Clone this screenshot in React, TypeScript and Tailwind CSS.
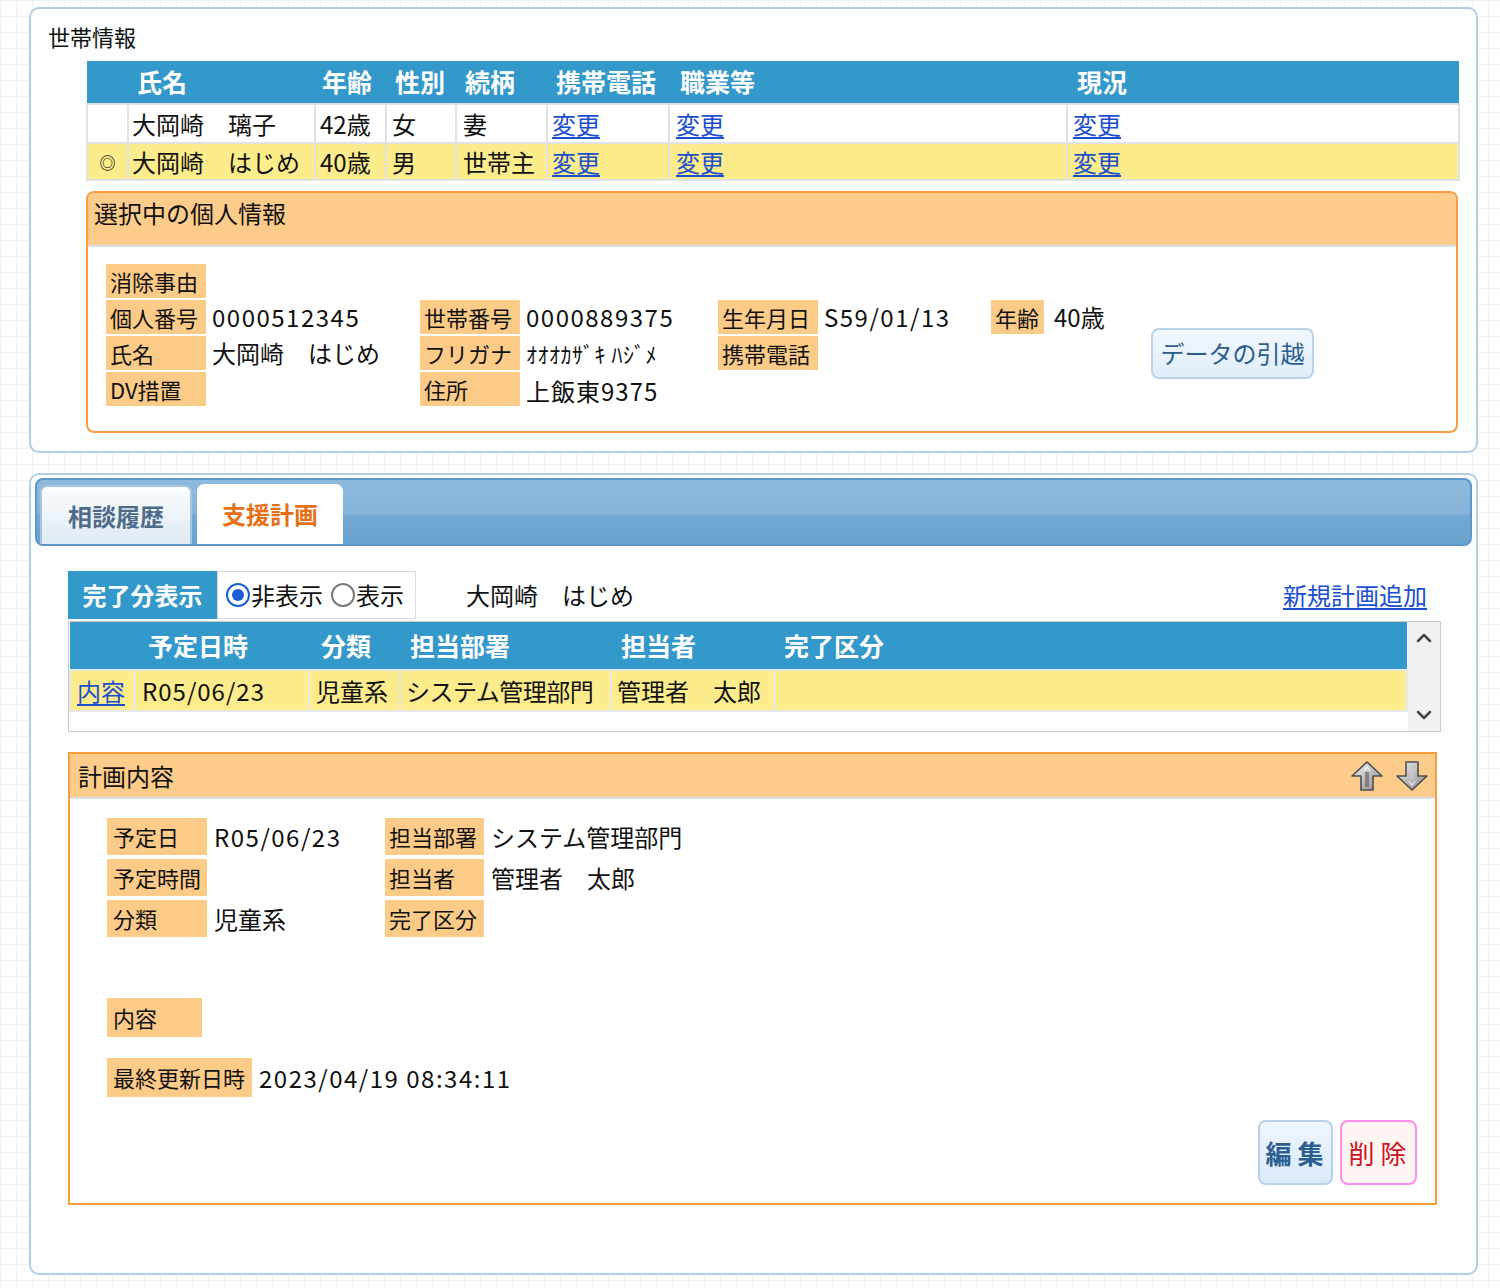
import { ChevronUp, ChevronDown } from "lucide-react";

// 共通ラベル（オレンジ）
function Label({ children, className = "" }: { children: React.ReactNode; className?: string }) {
  return (
    <span className={`inline-block shrink-0 bg-[#fdcb88] pl-[4px] text-[22px] text-[#111] ${className}`}>
      {children}
    </span>
  );
}

function BlockArrow({ down, id }: { down?: boolean; id: string }) {
  return (
    <svg width="34" height="32" viewBox="0 0 34 32" className={down ? "rotate-180" : ""}>
      <defs>
        <linearGradient id={id} x1="0" y1="0" x2="1" y2="1">
          <stop offset="0" stopColor={down ? "#8a8a8a" : "#f4f4f4"} />
          <stop offset="1" stopColor={down ? "#eeeeee" : "#8c8c8c"} />
        </linearGradient>
      </defs>
      <path
        d="M17 2 L32 16 L23 16 L23 30 L11 30 L11 16 L2 16 Z"
        fill={`url(#${id})`}
        stroke="#4d4d4d"
        strokeWidth="1.6"
        strokeLinejoin="round"
      />
      <path d="M15 12 L15 27 L19 27 L19 12 Z" fill={down ? "#c8c8c8" : "#6a6a6a"} opacity="0.7" />
      <path d="M14 11 L17 7 L20 11" fill="none" stroke="#fff" strokeWidth="1.2" opacity="0.8" />
    </svg>
  );
}

function Radio({ checked, label }: { checked?: boolean; label: string }) {
  return (
    <span className="flex items-center">
      {checked ? (
        <span className="flex h-[24px] w-[24px] items-center justify-center rounded-full border-[2px] border-[#1b5fd6] bg-white">
          <span className="h-[12px] w-[12px] rounded-full bg-[#1b5fd6]"></span>
        </span>
      ) : (
        <span className="h-[24px] w-[24px] rounded-full border-[2px] border-[#7a7a7a] bg-white"></span>
      )}
      <span className="ml-[1px] text-[24px] leading-none">{label}</span>
    </span>
  );
}

const link = "text-[#1b4fcf] underline underline-offset-[3px]";

export default function App() {
  return (
    <div className="min-h-[1288px] bg-[#fefefe] bg-[linear-gradient(#f1f1f1_1px,transparent_1px),linear-gradient(90deg,#f1f1f1_1px,transparent_1px)] bg-[size:16px_16px] pt-[7px] font-['Noto_Sans_CJK_JP',sans-serif] text-[#111]">
      {/* 世帯情報 */}
      <section className="ml-[29px] h-[446px] w-[1449px] rounded-[10px] border-2 border-[#b3cfe8] bg-[#fcfdfd] px-[17px] pt-[12px]">
        <h2 className="text-[22px] leading-[30px]">世帯情報</h2>
        <div className="ml-[38px] mt-[10px] w-[1372px]">
          <table className="w-[1372px] table-fixed border-collapse text-[24px]">
            <colgroup>
              <col className="w-[41px]" />
              <col className="w-[187px]" />
              <col className="w-[71px]" />
              <col className="w-[70px]" />
              <col className="w-[91px]" />
              <col className="w-[122px]" />
              <col className="w-[398px]" />
              <col className="w-[392px]" />
            </colgroup>
            <thead>
              <tr className="h-[43px] bg-[#3398ca] text-left text-[25px] font-bold text-white">
                <th></th>
                <th className="pl-[9px] font-bold">氏名</th>
                <th className="pl-[7px] font-bold">年齢</th>
                <th className="pl-[9px] font-bold">性別</th>
                <th className="pl-[9px] font-bold">続柄</th>
                <th className="pl-[9px] font-bold">携帯電話</th>
                <th className="pl-[11px] font-bold">職業等</th>
                <th className="pl-[10px] font-bold">現況</th>
              </tr>
            </thead>
            <tbody className="leading-[30px]">
              <tr className="h-[39px] bg-white">
                <td className="border-2 border-[#dfe3e8]"></td>
                <td className="border-2 border-[#dfe3e8] pl-[3px]">大岡崎　璃子</td>
                <td className="border-2 border-[#dfe3e8] pl-[4px]">42歳</td>
                <td className="border-2 border-[#dfe3e8] pl-[5px]">女</td>
                <td className="border-2 border-[#dfe3e8] pl-[6px]">妻</td>
                <td className="border-2 border-[#dfe3e8] pl-[4px]"><span className={link}>変更</span></td>
                <td className="border-2 border-[#dfe3e8] pl-[6px]"><span className={link}>変更</span></td>
                <td className="border-2 border-[#dfe3e8] pl-[5px]"><span className={link}>変更</span></td>
              </tr>
              <tr className="h-[37px] bg-[#fcec8c]">
                <td className="border-2 border-[#dfe3e8] text-center text-[16px] font-bold">◎</td>
                <td className="border-2 border-[#dfe3e8] pl-[3px]">大岡崎　はじめ</td>
                <td className="border-2 border-[#dfe3e8] pl-[4px]">40歳</td>
                <td className="border-2 border-[#dfe3e8] pl-[5px]">男</td>
                <td className="border-2 border-[#dfe3e8] pl-[6px]">世帯主</td>
                <td className="border-2 border-[#dfe3e8] pl-[4px]"><span className={link}>変更</span></td>
                <td className="border-2 border-[#dfe3e8] pl-[6px]"><span className={link}>変更</span></td>
                <td className="border-2 border-[#dfe3e8] pl-[5px]"><span className={link}>変更</span></td>
              </tr>
            </tbody>
          </table>

          {/* 選択中の個人情報 */}
          <div className="mt-[10px] overflow-hidden rounded-[8px] border-2 border-[#fa9d3c] bg-white">
            <div className="h-[54px] border-b-2 border-[#d8e0ea] bg-[#fdcc8b] pl-[6px] pt-[5px] text-[24px] leading-[30px]">
              選択中の個人情報
            </div>
            <div className="grid grid-cols-[314px_298px_273px_160px_auto] grid-rows-[34px_34px_34px_34px] gap-y-[2px] pb-[25px] pl-[18px] pt-[17px] text-[24px] leading-[34px]">
              <div className="col-start-1 row-start-1 flex"><Label className="w-[100px]">消除事由</Label></div>
              <div className="col-start-1 row-start-2 flex gap-[6px]"><Label className="w-[100px]">個人番号</Label><span className="tracking-[1.5px]">0000512345</span></div>
              <div className="col-start-1 row-start-3 flex gap-[6px]"><Label className="w-[100px]">氏名</Label><span>大岡崎　はじめ</span></div>
              <div className="col-start-1 row-start-4 flex"><Label className="w-[100px]">DV措置</Label></div>

              <div className="col-start-2 row-start-2 flex gap-[6px]"><Label className="w-[100px]">世帯番号</Label><span className="tracking-[1.5px]">0000889375</span></div>
              <div className="col-start-2 row-start-3 flex gap-[6px]"><Label className="w-[100px]">フリガナ</Label><span className="text-[22px] tracking-[0.5px]">ｵｵｵｶｻﾞｷ ﾊｼﾞﾒ</span></div>
              <div className="col-start-2 row-start-4 flex gap-[6px]"><Label className="w-[100px]">住所</Label><span className="mt-[2px] tracking-[1px]">上飯東9375</span></div>

              <div className="col-start-3 row-start-2 flex gap-[6px]"><Label className="w-[100px]">生年月日</Label><span className="tracking-[1.5px]">S59/01/13</span></div>
              <div className="col-start-3 row-start-3 flex"><Label className="w-[100px]">携帯電話</Label></div>

              <div className="col-start-4 row-start-2 flex gap-[10px]"><Label className="w-[53px]">年齢</Label><span>40歳</span></div>

              <div className="col-start-5 row-span-3 row-start-2 flex items-center">
                <button className="h-[51px] w-[163px] rounded-[8px] border-2 border-[#b9d3ea] bg-[linear-gradient(to_bottom,#f1f7fd,#e0edf9)] text-[24px] text-[#2d5d8c]">
                  データの引越
                </button>
              </div>
            </div>
          </div>
        </div>
      </section>

      {/* 相談履歴 / 支援計画 */}
      <section className="ml-[29px] mt-[20px] h-[802px] w-[1449px] rounded-[10px] border-2 border-[#b3cfe8] bg-[#fcfdfd] px-[4px] pt-[3px]">
        <div className="flex h-[68px] items-end rounded-[8px] border-2 border-[#5d98cb] bg-[linear-gradient(to_bottom,#8dbadd_0%,#86b4da_52%,#72a8d3_56%,#6aa2cf_100%)] pl-[3px]">
          <div className="flex h-[59px] w-[152px] items-center justify-center rounded-t-[7px] border-2 border-b-0 border-[#a6c5e1] bg-[linear-gradient(to_bottom,#fbfdfe,#dfeaf4)] text-[24px] font-bold text-[#4e6b89]">
            相談履歴
          </div>
          <div className="ml-[5px] flex h-[60px] w-[146px] items-center justify-center rounded-t-[7px] bg-white text-[24px] font-bold text-[#e66f18]">
            支援計画
          </div>
        </div>

        <div className="pl-[33px] pr-[33px] pt-[25px]">
          <div className="flex h-[48px] items-center">
            <div className="flex h-[48px] w-[149px] items-center justify-center bg-[#3398ca] text-[24px] font-bold text-white">
              完了分表示
            </div>
            <div className="flex h-[48px] w-[199px] items-center gap-[8px] border border-[#dcdcdc] bg-white pl-[8px]">
              <Radio checked label="非表示" />
              <Radio label="表示" />
            </div>
            <span className="ml-[50px] text-[24px]">大岡崎　はじめ</span>
            <span className={`ml-auto mr-[12px] text-[24px] ${link}`}>新規計画追加</span>
          </div>

          {/* 計画一覧 */}
          <div className="mt-[2px] flex h-[111px] w-[1373px] border border-[#c9c9c9] bg-white">
            <div className="w-[1339px]">
              <table className="w-[1339px] table-fixed border-collapse text-[24px]">
                <colgroup>
                  <col className="w-[65px]" />
                  <col className="w-[174px]" />
                  <col className="w-[91px]" />
                  <col className="w-[211px]" />
                  <col className="w-[164px]" />
                  <col />
                </colgroup>
                <thead>
                  <tr className="h-[48px] bg-[#3398ca] text-left text-[25px] text-white">
                    <th></th>
                    <th className="pl-[13px] font-bold">予定日時</th>
                    <th className="pl-[12px] font-bold">分類</th>
                    <th className="pl-[10px] font-bold">担当部署</th>
                    <th className="pl-[10px] font-bold">担当者</th>
                    <th className="pl-[9px] font-bold">完了区分</th>
                  </tr>
                </thead>
                <tbody>
                  <tr className="h-[41px] bg-[#fcec8c] leading-[30px]">
                    <td className="border-2 border-[#e7e7e7] pl-[6px]"><span className={link}>内容</span></td>
                    <td className="border-2 border-[#e7e7e7] pl-[6px] tracking-[1px]">R05/06/23</td>
                    <td className="border-2 border-[#e7e7e7] pl-[6px]">児童系</td>
                    <td className="border-2 border-[#e7e7e7] pl-[5px] tracking-[-0.5px]">システム管理部門</td>
                    <td className="border-2 border-[#e7e7e7] pl-[5px]">管理者　太郎</td>
                    <td className="border-2 border-[#e7e7e7]"></td>
                  </tr>
                </tbody>
              </table>
            </div>
            <div className="flex w-[34px] flex-col items-center justify-between bg-[#f0f0f0] py-[4px] text-[#444]">
              <ChevronUp size={24} strokeWidth={2.5} />
              <ChevronDown size={24} strokeWidth={2.5} />
            </div>
          </div>

          {/* 計画内容 */}
          <div className="mt-[20px] h-[453px] w-[1369px] border-2 border-[#fa9d3c] bg-white">
            <div className="flex h-[45px] items-center border-b-2 border-[#d8e0ea] bg-[#fdcc8b] pl-[8px] pr-[6px] text-[24px]">
              <span>計画内容</span>
              <span className="ml-auto flex gap-[11px]">
                <BlockArrow id="arrUp" />
                <BlockArrow down id="arrDown" />
              </span>
            </div>
            <div className="relative h-[404px] pl-[37px] pt-[19px] text-[24px] leading-[37px]">
              <div className="grid grid-cols-[278px_auto] grid-rows-[37px_37px_37px] gap-y-[4px]">
                <div className="flex gap-[7px]"><Label className="w-[100px] pl-[6px]">予定日</Label><span className="tracking-[1.5px]">R05/06/23</span></div>
                <div className="flex gap-[7px]"><Label className="w-[99px]">担当部署</Label><span>システム管理部門</span></div>
                <div className="flex gap-[7px]"><Label className="w-[100px] pl-[6px]">予定時間</Label></div>
                <div className="flex gap-[7px]"><Label className="w-[99px]">担当者</Label><span>管理者　太郎</span></div>
                <div className="flex gap-[7px]"><Label className="w-[100px] pl-[6px]">分類</Label><span>児童系</span></div>
                <div className="flex gap-[7px]"><Label className="w-[99px]">完了区分</Label></div>
              </div>
              <div className="mt-[61px] flex h-[39px]"><Label className="w-[95px] pl-[6px] leading-[39px]">内容</Label></div>
              <div className="mt-[21px] flex h-[39px] gap-[7px]">
                <Label className="w-[145px] pl-[6px] leading-[39px]">最終更新日時</Label>
                <span className="leading-[39px] tracking-[1.5px]">2023/04/19 08:34:11</span>
              </div>
              <div className="absolute bottom-[18px] right-[18px] flex gap-[7px]">
                <button className="h-[65px] w-[75px] rounded-[8px] border-2 border-[#b7d1ea] bg-[linear-gradient(to_bottom,#eef5fd,#dbeaf8)] pl-[4px] text-[26px] font-bold tracking-[6px] text-[#2b5e91]">
                  編集
                </button>
                <button className="h-[65px] w-[77px] rounded-[8px] border-2 border-[#ff8cf0] bg-[#fff5f2] pl-[4px] text-[26px] tracking-[6px] text-[#cc1424]">
                  削除
                </button>
              </div>
            </div>
          </div>
        </div>
      </section>
    </div>
  );
}
